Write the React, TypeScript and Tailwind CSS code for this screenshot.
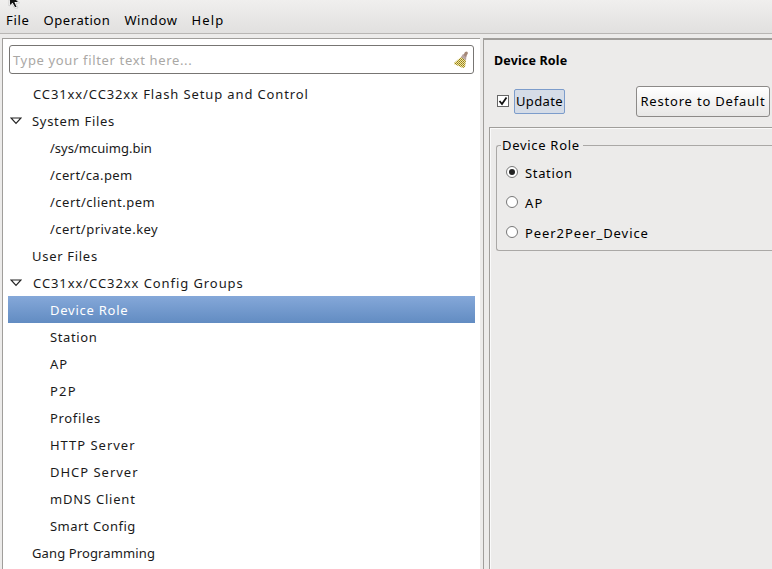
import React from "react";

type Row = { label: string; level: 0 | 1; open?: boolean; selected?: boolean; tracking: string };

const rows: Row[] = [
  { label: "CC31xx/CC32xx Flash Setup and Control", level: 0, tracking: "pl-px tracking-[0.88px]" },
  { label: "System Files", level: 0, open: true, tracking: "tracking-[0.7px]" },
  { label: "/sys/mcuimg.bin", level: 1, tracking: "tracking-[0.02px]" },
  { label: "/cert/ca.pem", level: 1, tracking: "tracking-[0.4px]" },
  { label: "/cert/client.pem", level: 1, tracking: "tracking-[0.5px]" },
  { label: "/cert/private.key", level: 1, tracking: "tracking-[0.48px]" },
  { label: "User Files", level: 0, tracking: "tracking-[0.7px]" },
  { label: "CC31xx/CC32xx Config Groups", level: 0, open: true, tracking: "pl-px tracking-[0.92px]" },
  { label: "Device Role", level: 1, selected: true, tracking: "tracking-[0.75px]" },
  { label: "Station", level: 1, tracking: "tracking-[0.6px]" },
  { label: "AP", level: 1, tracking: "tracking-[1px]" },
  { label: "P2P", level: 1, tracking: "tracking-[1.2px]" },
  { label: "Profiles", level: 1, tracking: "tracking-[0.65px]" },
  { label: "HTTP Server", level: 1, tracking: "tracking-[0.98px]" },
  { label: "DHCP Server", level: 1, tracking: "tracking-[0.98px]" },
  { label: "mDNS Client", level: 1, tracking: "tracking-[0.78px]" },
  { label: "Smart Config", level: 1, tracking: "tracking-[0.48px]" },
  { label: "Gang Programming", level: 0, tracking: "tracking-[0.12px]" },
];

function Pointer() {
  return (
    <svg className="absolute left-[8px] top-0" width="14" height="9" viewBox="0 0 14 9">
      <path d="M1 0V6L4 4L6.5 8H10L8 3H11.5L9 0Z" fill="#fff" stroke="#bbb" strokeWidth="0.6" />
      <path d="M2 0V5L4.6 2.8L7 7H8.6L6.4 2H10L8 0Z" fill="#111" />
    </svg>
  );
}

function Broom() {
  return (
    <svg width="16" height="18" viewBox="0 0 16 18">
      <defs>
        <pattern id="bristle" width="2" height="2" patternUnits="userSpaceOnUse">
          <rect width="2" height="2" fill="#f3e9a4" />
          <rect width="1" height="1" fill="#8d7a1c" />
          <rect x="1" y="1" width="1" height="1" fill="#a8922c" />
        </pattern>
      </defs>
      <path d="M8 6L13 9L12 16L10 17L1 13L1 12Z" fill="url(#bristle)" />
      <path d="M8 6L10 3L13.5 5L13 9.5Z" fill="#b9a6a4" />
      <path d="M10.5 4L12 1L14 0.5L15 2L13 6Z" fill="#a58878" />
    </svg>
  );
}

function Expander() {
  return (
    <svg width="12" height="8" viewBox="0 0 12 8">
      <path d="M1 1H11L6 6.3Z" fill="#fff" stroke="#222" strokeWidth="1.2" />
    </svg>
  );
}

function TreeRow({ row }: { row: Row }) {
  return (
    <div
      className={`flex h-[27px] items-center ${
        row.selected ? "bg-linear-to-b from-[#85a8d9] to-[#628cc2] text-white" : "text-[#1a1a1a]"
      }`}
    >
      <span className={`flex shrink-0 items-center pl-[1.5px] ${row.level ? "w-[42px]" : "w-[24px]"}`}>
        {row.open && <Expander />}
      </span>
      <span className={row.tracking}>{row.label}</span>
    </div>
  );
}

function Radio({ label, on, tracking }: { label: string; on?: boolean; tracking: string }) {
  return (
    <div className="flex h-[30px] items-center gap-[7px]">
      <span className="-mt-0.5 flex size-[12px] items-center justify-center rounded-full border border-[#777] bg-white">
        {on && <span className="size-[6px] rounded-full bg-[#222]" />}
      </span>
      <span className={tracking}>{label}</span>
    </div>
  );
}

export default function App() {
  return (
    <div className="flex h-[569px] w-[772px] flex-col overflow-hidden bg-[#ecebea] font-['Noto_Sans',sans-serif] text-[13px] leading-[18px] whitespace-nowrap text-black">
      <header className="relative flex h-[34px] shrink-0 items-center gap-[14px] border-b border-[#b8b6b4] bg-linear-to-b from-[#f0efee] to-[#e1e0df] pt-[7px] pl-[6px]">
        <Pointer />
        <span className="tracking-[0.7px]">File</span>
        <span className="tracking-[0.55px]">Operation</span>
        <span className="tracking-[0.65px]">Window</span>
        <span className="tracking-[1.1px]">Help</span>
      </header>
      <main className="flex min-h-0 flex-1 pt-[4px] pl-[2px]">
        <section className="w-[478px] shrink-0 border-t border-l border-[#a09e9b] bg-white pt-[6px] pl-[5px]">
          <div className="ml-px flex h-[29px] w-[465px] items-center justify-between rounded-[3px] border border-[#777573] bg-white pr-[4px] pl-[3px] text-[#aaa8a5]">
            <span className="tracking-[0.65px]">Type your filter text here...</span>
            <Broom />
          </div>
          <div className="mt-[6px] w-[467px]">
            {rows.map((row, i) => (
              <TreeRow key={i} row={row} />
            ))}
          </div>
        </section>
        <section className="ml-[3px] flex flex-1 flex-col border-t-2 border-l border-[#a09e9b]">
          <h1 className="mt-[12px] ml-[10px] text-[12.5px] font-bold tracking-[0.15px]">Device Role</h1>
          <div className="mt-[15px] flex h-[32px] items-center pr-[2px] pl-[13px]">
            <span className="mr-[5px] flex size-[12px] items-center justify-center border border-[#666] bg-white">
              <svg width="10" height="10" viewBox="0 0 10 10">
                <path d="M1.5 5L4 8L8.5 1.5" fill="none" stroke="#111" strokeWidth="1.8" />
              </svg>
            </span>
            <span className="flex h-[25px] w-[51px] items-center justify-center rounded-[2px] border border-[#7c9ccb] bg-[#d5dce7] tracking-[0.4px]">
              Update
            </span>
            <button className="ml-auto h-[31px] w-[134px] rounded-[3px] border border-[#8c8a88] bg-linear-to-b from-white to-[#e8e7e6] tracking-[0.8px]">
              Restore to Default
            </button>
          </div>
          <div className="mt-[10px] ml-[5px] flex-1 border-t border-l border-[#a09e9b] shadow-[inset_1px_1px_0_#fafafa]">
            <fieldset className="mt-[8px] ml-[6px] h-[115px] rounded-l-[3px] border border-r-0 border-[#aaa8a6] pl-[9px]">
              <legend className="-ml-[5px] pr-[3px] pl-px tracking-[0.7px]">Device Role</legend>
              <div className="mt-[4px]">
                <Radio label="Station" on tracking="tracking-[0.65px]" />
                <Radio label="AP" tracking="tracking-[1.2px]" />
                <Radio label="Peer2Peer_Device" tracking="tracking-[0.92px]" />
              </div>
            </fieldset>
          </div>
        </section>
      </main>
    </div>
  );
}
